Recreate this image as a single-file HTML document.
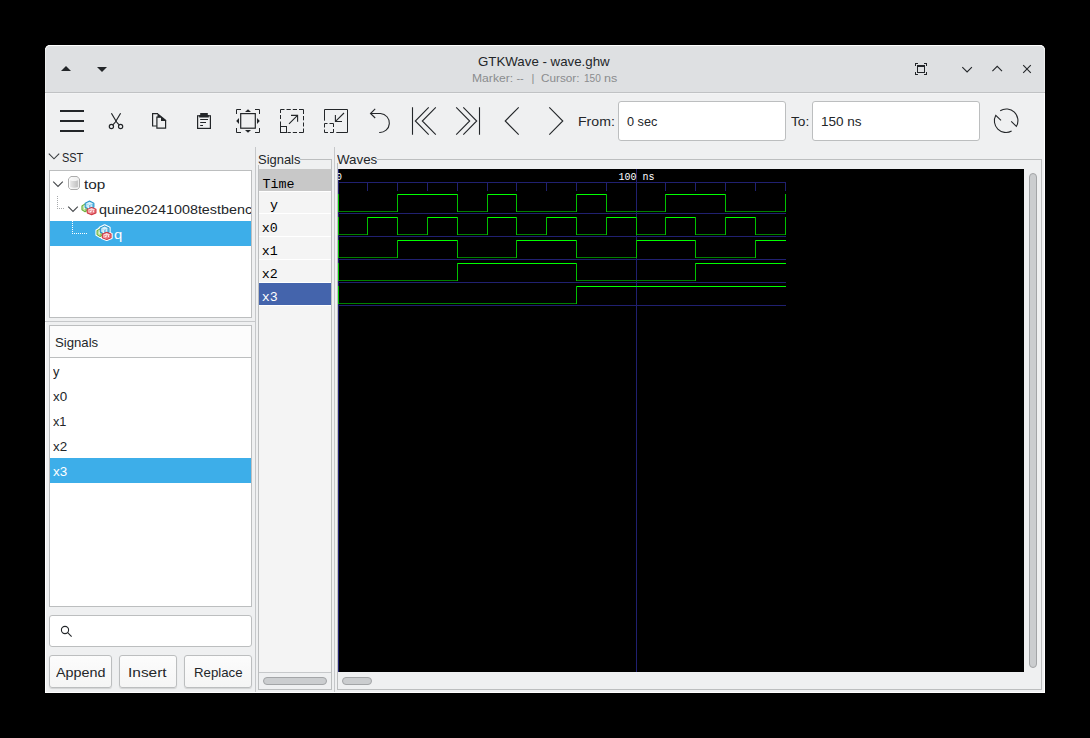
<!DOCTYPE html>
<html><head><meta charset="utf-8"><title>GTKWave - wave.ghw</title>
<style>
html,body{margin:0;padding:0;background:#000;}
body{width:1090px;height:738px;position:relative;overflow:hidden;font-family:"Liberation Sans",sans-serif;font-size:13.3px;color:#232629;}
.a{position:absolute;}
.t{position:absolute;white-space:nowrap;line-height:1;}
.mono{font-family:"Liberation Mono",monospace;}
#win{left:45px;top:45px;width:1000px;height:648px;background:#eff0f1;border-radius:5px 5px 0 0;overflow:hidden;}
#titlebar{left:0;top:0;width:1000px;height:47px;background:#dee0e2;border-bottom:1px solid #c0c2c4;border-radius:5px 5px 0 0;box-shadow:inset 0 1px 0 #ffffff, inset 1px 0 0 #eceded, inset -1px 0 0 #eceded;}
#winedge{left:0;top:48px;width:1000px;height:600px;box-sizing:border-box;border:1px solid #fff;border-top:none;pointer-events:none;}
#hl{left:1px;top:48px;width:998px;height:1px;background:#f3f4f5;}
.entry{background:#fff;border:1px solid #bcbebf;border-radius:3px;box-sizing:border-box;}
.btn{background:linear-gradient(#fcfcfc,#f5f5f5);border:1px solid #bcbebf;border-radius:3px;box-sizing:border-box;box-shadow:0 1px 1px rgba(0,0,0,0.12);}
.box{background:#fff;border:1px solid #bcbebf;box-sizing:border-box;}
.sel{background:#3daee9;}
</style></head><body>
<div id="win" class="a">
  <div id="titlebar" class="a"></div>
  <div id="hl" class="a"></div>
  <div id="winedge" class="a"></div>
</div>

<!-- title text -->

<!-- toolbar labels / entries -->
<div class="a entry" style="left:618px;top:101px;width:168px;height:40px;"></div>
<div class="a entry" style="left:812px;top:101px;width:168px;height:40px;"></div>

<!-- SST -->
<div class="a box" style="left:49px;top:170px;width:203px;height:148px;"></div>
<div class="a sel" style="left:50px;top:221px;width:201px;height:25px;"></div>

<!-- horizontal pane separator -->
<div class="a" style="left:45px;top:321px;width:210px;height:1px;background:#c6c8ca;"></div>

<!-- Signals list -->
<div class="a box" style="left:49px;top:325px;width:203px;height:282px;"></div>
<div class="a" style="left:50px;top:326px;width:201px;height:31px;background:#fcfcfc;border-bottom:1px solid #bcbebf;"></div>
<div class="a sel" style="left:50px;top:458px;width:201px;height:25px;"></div>

<!-- search + buttons -->
<div class="a entry" style="left:49px;top:615px;width:203px;height:32px;"></div>
<div class="a btn" style="left:49px;top:655px;width:63px;height:33px;"></div>
<div class="a btn" style="left:119px;top:655px;width:58px;height:33px;"></div>
<div class="a btn" style="left:184px;top:655px;width:68px;height:33px;"></div>

<!-- pane handles -->
<div class="a" style="left:255px;top:147px;width:1px;height:545px;background:#c6c8ca;"></div>
<div class="a" style="left:334px;top:147px;width:1px;height:545px;background:#c6c8ca;"></div>

<!-- Signals frame -->
<div class="a" style="left:258px;top:159px;width:74px;height:531px;border:1px solid #bcbebf;box-sizing:border-box;"></div>
<div class="a" style="left:257px;top:150px;width:43px;height:15px;background:#eff0f1;"></div>
<div class="a" style="left:259px;top:169px;width:72px;height:503px;background:#f4f4f4;"></div>
<div class="a" style="left:259px;top:169px;width:72px;height:22px;background:#c8c8c8;"></div>
<div class="a" style="left:259px;top:191px;width:72px;height:1px;background:#fff;"></div>
<div class="a" style="left:259px;top:213px;width:72px;height:1px;background:#fff;"></div>
<div class="a" style="left:259px;top:236px;width:72px;height:1px;background:#fff;"></div>
<div class="a" style="left:259px;top:259px;width:72px;height:1px;background:#fff;"></div>
<div class="a" style="left:259px;top:282px;width:72px;height:1px;background:#fff;"></div>
<div class="a" style="left:259px;top:283px;width:72px;height:22px;background:#4464ac;"></div>
<div class="a" style="left:259px;top:305px;width:72px;height:1px;background:#fff;"></div>
<div class="a" style="left:259px;top:672px;width:72px;height:1px;background:#c6c8ca;"></div>
<div class="a" style="left:259px;top:673px;width:72px;height:16px;background:#eff0f1;"></div>
<div class="a" style="left:263px;top:677px;width:64px;height:8px;border-radius:4px;background:#cbcdcf;border:1px solid #a3a5a7;box-sizing:border-box;"></div>

<!-- Waves frame -->
<div class="a" style="left:337px;top:159px;width:705px;height:531px;border:1px solid #bcbebf;box-sizing:border-box;"></div>
<div class="a" style="left:336px;top:150px;width:41px;height:13px;background:#eff0f1;"></div>
<div class="a" id="canvas" style="left:338px;top:169px;width:686px;height:503px;background:#000;overflow:hidden;"><svg width="686" height="503" viewBox="0 0 686 503" shape-rendering="crispEdges" style="position:absolute;left:0;top:0"><rect x="0" y="13" width="448" height="1" fill="#202070"/><rect x="0" y="14" width="1" height="8" fill="#202070"/><rect x="29" y="14" width="1" height="8" fill="#202070"/><rect x="59" y="14" width="1" height="8" fill="#202070"/><rect x="89" y="14" width="1" height="8" fill="#202070"/><rect x="119" y="14" width="1" height="8" fill="#202070"/><rect x="149" y="14" width="1" height="8" fill="#202070"/><rect x="178" y="14" width="1" height="8" fill="#202070"/><rect x="208" y="14" width="1" height="8" fill="#202070"/><rect x="238" y="14" width="1" height="8" fill="#202070"/><rect x="268" y="14" width="1" height="8" fill="#202070"/><rect x="298" y="14" width="1" height="8" fill="#202070"/><rect x="327" y="14" width="1" height="8" fill="#202070"/><rect x="357" y="14" width="1" height="8" fill="#202070"/><rect x="387" y="14" width="1" height="8" fill="#202070"/><rect x="417" y="14" width="1" height="8" fill="#202070"/><rect x="447" y="14" width="1" height="8" fill="#202070"/><rect x="0" y="0" width="1" height="503" fill="#202070"/><rect x="298" y="0" width="1" height="503" fill="#202070"/><rect x="0" y="44" width="448" height="1" fill="#202070"/><rect x="0" y="42" width="60" height="1" fill="#008000"/><rect x="59" y="25" width="61" height="1" fill="#00ff00"/><rect x="119" y="42" width="31" height="1" fill="#008000"/><rect x="149" y="25" width="30" height="1" fill="#00ff00"/><rect x="178" y="42" width="61" height="1" fill="#008000"/><rect x="238" y="25" width="31" height="1" fill="#00ff00"/><rect x="268" y="42" width="60" height="1" fill="#008000"/><rect x="327" y="25" width="61" height="1" fill="#00ff00"/><rect x="387" y="42" width="61" height="1" fill="#008000"/><rect x="0" y="25" width="1" height="18" fill="#00c000"/><rect x="59" y="25" width="1" height="18" fill="#00c000"/><rect x="119" y="25" width="1" height="18" fill="#00c000"/><rect x="149" y="25" width="1" height="18" fill="#00c000"/><rect x="178" y="25" width="1" height="18" fill="#00c000"/><rect x="238" y="25" width="1" height="18" fill="#00c000"/><rect x="268" y="25" width="1" height="18" fill="#00c000"/><rect x="327" y="25" width="1" height="18" fill="#00c000"/><rect x="387" y="25" width="1" height="18" fill="#00c000"/><rect x="447" y="25" width="1" height="18" fill="#00c000"/><rect x="0" y="67" width="448" height="1" fill="#202070"/><rect x="0" y="65" width="30" height="1" fill="#008000"/><rect x="29" y="48" width="31" height="1" fill="#00ff00"/><rect x="59" y="65" width="31" height="1" fill="#008000"/><rect x="89" y="48" width="31" height="1" fill="#00ff00"/><rect x="119" y="65" width="31" height="1" fill="#008000"/><rect x="149" y="48" width="30" height="1" fill="#00ff00"/><rect x="178" y="65" width="31" height="1" fill="#008000"/><rect x="208" y="48" width="31" height="1" fill="#00ff00"/><rect x="238" y="65" width="31" height="1" fill="#008000"/><rect x="268" y="48" width="31" height="1" fill="#00ff00"/><rect x="298" y="65" width="30" height="1" fill="#008000"/><rect x="327" y="48" width="31" height="1" fill="#00ff00"/><rect x="357" y="65" width="31" height="1" fill="#008000"/><rect x="387" y="48" width="31" height="1" fill="#00ff00"/><rect x="417" y="65" width="31" height="1" fill="#008000"/><rect x="0" y="48" width="1" height="18" fill="#00c000"/><rect x="29" y="48" width="1" height="18" fill="#00c000"/><rect x="59" y="48" width="1" height="18" fill="#00c000"/><rect x="89" y="48" width="1" height="18" fill="#00c000"/><rect x="119" y="48" width="1" height="18" fill="#00c000"/><rect x="149" y="48" width="1" height="18" fill="#00c000"/><rect x="178" y="48" width="1" height="18" fill="#00c000"/><rect x="208" y="48" width="1" height="18" fill="#00c000"/><rect x="238" y="48" width="1" height="18" fill="#00c000"/><rect x="268" y="48" width="1" height="18" fill="#00c000"/><rect x="298" y="48" width="1" height="18" fill="#00c000"/><rect x="327" y="48" width="1" height="18" fill="#00c000"/><rect x="357" y="48" width="1" height="18" fill="#00c000"/><rect x="387" y="48" width="1" height="18" fill="#00c000"/><rect x="417" y="48" width="1" height="18" fill="#00c000"/><rect x="447" y="48" width="1" height="18" fill="#00c000"/><rect x="0" y="90" width="448" height="1" fill="#202070"/><rect x="0" y="88" width="60" height="1" fill="#008000"/><rect x="59" y="71" width="61" height="1" fill="#00ff00"/><rect x="119" y="88" width="60" height="1" fill="#008000"/><rect x="178" y="71" width="61" height="1" fill="#00ff00"/><rect x="238" y="88" width="61" height="1" fill="#008000"/><rect x="298" y="71" width="60" height="1" fill="#00ff00"/><rect x="357" y="88" width="61" height="1" fill="#008000"/><rect x="417" y="71" width="31" height="1" fill="#00ff00"/><rect x="0" y="71" width="1" height="18" fill="#00c000"/><rect x="59" y="71" width="1" height="18" fill="#00c000"/><rect x="119" y="71" width="1" height="18" fill="#00c000"/><rect x="178" y="71" width="1" height="18" fill="#00c000"/><rect x="238" y="71" width="1" height="18" fill="#00c000"/><rect x="298" y="71" width="1" height="18" fill="#00c000"/><rect x="357" y="71" width="1" height="18" fill="#00c000"/><rect x="417" y="71" width="1" height="18" fill="#00c000"/><rect x="0" y="113" width="448" height="1" fill="#202070"/><rect x="0" y="111" width="120" height="1" fill="#008000"/><rect x="119" y="94" width="120" height="1" fill="#00ff00"/><rect x="238" y="111" width="120" height="1" fill="#008000"/><rect x="357" y="94" width="91" height="1" fill="#00ff00"/><rect x="0" y="94" width="1" height="18" fill="#00c000"/><rect x="119" y="94" width="1" height="18" fill="#00c000"/><rect x="238" y="94" width="1" height="18" fill="#00c000"/><rect x="357" y="94" width="1" height="18" fill="#00c000"/><rect x="0" y="136" width="448" height="1" fill="#202070"/><rect x="0" y="134" width="239" height="1" fill="#008000"/><rect x="238" y="117" width="210" height="1" fill="#00ff00"/><rect x="0" y="117" width="1" height="18" fill="#00c000"/><rect x="238" y="117" width="1" height="18" fill="#00c000"/></svg>
  <div class="t mono" id="t0" style="left:-2px;top:2.5px;font-size:10px;color:#fff;transform-origin:0 0;transform:scaleY(1.17);">0</div>
  <div class="t mono" id="t100" style="left:280.6px;top:2.5px;font-size:10px;color:#fff;transform-origin:0 0;transform:scaleY(1.17);">100 ns</div>
</div>
<div class="a" style="left:1029px;top:173px;width:8px;height:495px;border-radius:4px;background:#cbcdcf;border:1px solid #a3a5a7;box-sizing:border-box;"></div>
<div class="a" style="left:342px;top:677px;width:30px;height:8px;border-radius:4px;background:#cbcdcf;border:1px solid #a3a5a7;box-sizing:border-box;"></div>

<div class="t" id="ttl" style="left:478.40px;top:55.00px;font-size:13.3px;color:#232629;transform-origin:0 0;transform:scaleX(0.9992);">GTKWave - wave.ghw</div>
<div class="t" id="sub1" style="left:471.50px;top:73.00px;font-size:11px;color:#8a8c8e;transform-origin:0 0;transform:scaleX(1.1028);">Marker:</div>
<div class="t" id="sub2" style="left:516.40px;top:73.00px;font-size:11px;color:#8a8c8e;transform-origin:0 0;transform:scaleX(1.0000);">--</div>
<div class="t" id="sub3" style="left:531.40px;top:73.00px;font-size:11px;color:#8a8c8e;transform-origin:0 0;transform:scaleX(1.0000);">|</div>
<div class="t" id="sub4" style="left:541.43px;top:73.00px;font-size:11px;color:#8a8c8e;transform-origin:0 0;transform:scaleX(1.0676);">Cursor:</div>
<div class="t" id="sub5" style="left:584.28px;top:73.00px;font-size:11px;color:#8a8c8e;transform-origin:0 0;transform:scaleX(0.9176);">150</div>
<div class="t" id="sub6" style="left:604.46px;top:73.00px;font-size:11px;color:#8a8c8e;transform-origin:0 0;transform:scaleX(1.1400);">ns</div>
<div class="t" id="from" style="left:578.34px;top:115.00px;font-size:13.3px;color:#232629;transform-origin:0 0;transform:scaleX(1.0606);">From:</div>
<div class="t" id="fromv" style="left:627.40px;top:115.00px;font-size:13.3px;color:#232629;transform-origin:0 0;transform:scaleX(0.9563);">0 sec</div>
<div class="t" id="to" style="left:791.00px;top:115.00px;font-size:13.3px;color:#232629;transform-origin:0 0;transform:scaleX(1.0294);">To:</div>
<div class="t" id="tov" style="left:820.98px;top:115.00px;font-size:13.3px;color:#232629;transform-origin:0 0;transform:scaleX(1.0179);">150 ns</div>
<div class="t" id="sst" style="left:61.58px;top:151.00px;font-size:13.3px;color:#232629;transform-origin:0 0;transform:scaleX(0.8240);">SST</div>
<div class="t" id="top" style="left:84.30px;top:177.60px;font-size:13.3px;color:#232629;transform-origin:0 0;transform:scaleX(1.1500);">top</div>
<div class="a" style="left:97px;top:202.60px;width:154px;height:17.3px;overflow:hidden;"><div class="t" id="quine" style="left:1.62px;top:0;font-size:13.3px;color:#232629;transform-origin:0 0;transform:scaleX(1.0784);">quine20241008testbench</div></div>
<div class="t" id="q" style="left:113.88px;top:227.60px;font-size:13.3px;color:#fff;transform-origin:0 0;transform:scaleX(1.1167);">q</div>
<div class="t" id="sigh" style="left:55.41px;top:336.00px;font-size:13.3px;color:#232629;transform-origin:0 0;transform:scaleX(0.9905);">Signals</div>
<div class="t" id="l0" style="left:53.10px;top:365.00px;font-size:13.3px;color:#232629;transform-origin:0 0;transform:scaleX(0.9714);">y</div>
<div class="t" id="l1" style="left:53.10px;top:390.00px;font-size:13.3px;color:#232629;transform-origin:0 0;transform:scaleX(1.0071);">x0</div>
<div class="t" id="l2" style="left:53.10px;top:415.00px;font-size:13.3px;color:#232629;transform-origin:0 0;transform:scaleX(0.9571);">x1</div>
<div class="t" id="l3" style="left:53.10px;top:440.00px;font-size:13.3px;color:#232629;transform-origin:0 0;transform:scaleX(1.0071);">x2</div>
<div class="t" id="l4" style="left:53.10px;top:465.00px;font-size:13.3px;color:#fff;transform-origin:0 0;transform:scaleX(1.0071);">x3</div>
<div class="t" id="b1" style="left:56.00px;top:666.00px;font-size:13.3px;color:#232629;transform-origin:0 0;transform:scaleX(1.0800);">Append</div>
<div class="t" id="b2" style="left:128.24px;top:666.00px;font-size:13.3px;color:#232629;transform-origin:0 0;transform:scaleX(1.1625);">Insert</div>
<div class="t" id="b3" style="left:193.60px;top:666.00px;font-size:13.3px;color:#232629;transform-origin:0 0;transform:scaleX(0.9957);">Replace</div>
<div class="t" id="sigf" style="left:257.53px;top:152.80px;font-size:13.3px;color:#232629;transform-origin:0 0;transform:scaleX(0.9738);">Signals</div>
<div class="t" id="wavf" style="left:337.00px;top:152.80px;font-size:13.3px;color:#232629;transform-origin:0 0;transform:scaleX(1.0025);">Waves</div>
<div class="t" id="m0" style="left:262.50px;top:178.00px;font-size:13.33px;color:#000;font-family:'Liberation Mono',monospace;transform-origin:0 0;transform:scaleX(1.0000);">Time</div>
<div class="t" id="m1" style="left:270.00px;top:199.00px;font-size:13.33px;color:#000;font-family:'Liberation Mono',monospace;transform-origin:0 0;transform:scaleX(1.0000);">y</div>
<div class="t" id="m2" style="left:261.80px;top:222.00px;font-size:13.33px;color:#000;font-family:'Liberation Mono',monospace;transform-origin:0 0;transform:scaleX(1.0000);">x0</div>
<div class="t" id="m3" style="left:261.80px;top:245.00px;font-size:13.33px;color:#000;font-family:'Liberation Mono',monospace;transform-origin:0 0;transform:scaleX(1.0000);">x1</div>
<div class="t" id="m4" style="left:261.80px;top:268.00px;font-size:13.33px;color:#000;font-family:'Liberation Mono',monospace;transform-origin:0 0;transform:scaleX(1.0000);">x2</div>
<div class="t" id="m5" style="left:261.80px;top:291.00px;font-size:13.33px;color:#fff;font-family:'Liberation Mono',monospace;transform-origin:0 0;transform:scaleX(1.0000);">x3</div>
<!--ICONS_START--><svg class="a" style="left:0;top:0;pointer-events:none" width="1090" height="738" viewBox="0 0 1090 738" fill="none" stroke="#232629" stroke-width="1">
<!-- titlebar left triangles -->
<path d="M61 71 L66 66 L71 71 Z" fill="#232629" stroke="none"/>
<path d="M97 67 L107 67 L102 72 Z" fill="#232629" stroke="none"/>
<!-- titlebar right: fullscreen -->
<g stroke="none" fill="#232629">
<path d="M915 63h3v1h-2v2h-1z M927 63v3h-1v-2h-2v-1z M915 75v-3h1v2h2v1z M927 75h-3v-1h2v-2h1z"/>
<path d="M917 65h8v8h-8z M918 67v5h6v-5z" fill-rule="evenodd"/>
</g>
<path d="M962.3 67.2 L967.1 72 L971.9 67.2" stroke-width="1.1"/>
<path d="M992.4 71.2 L997.2 66.4 L1002 71.2" stroke-width="1.1"/>
<path d="M1023.2 65.2 L1030.8 72.8 M1030.8 65.2 L1023.2 72.8" stroke-width="1.1"/>

<!-- hamburger -->
<path d="M60 111h24 M60 121h24 M60 131h24" stroke-width="2"/>
<!-- scissors -->
<g stroke-width="1.2">
<path d="M111.4 113.2 L116.6 122 Q118 124 119.2 124.8"/>
<path d="M120.6 113.2 L115.4 122 Q114 124 112.8 124.8"/>
<circle cx="111.4" cy="126.5" r="2.1"/>
<circle cx="120.6" cy="126.5" r="2.1"/>
</g>
<!-- copy -->
<g stroke-width="1.2">
<path d="M158 113.6 H152.6 V126 H156.8"/>
<path d="M161 117.2 H156.9 V128.2 H165.6 V120.5"/>
<path d="M157.5 113 L166.2 119.9 V120.9 H161 V117.2 H157.5 Z" fill="#232629" stroke="none"/>
</g>
<!-- paste -->
<g>
<rect x="197.6" y="115.8" width="12.8" height="12.6" stroke-width="1.2"/>
<path d="M200.2 113h7.6v2h1v2.6h-9.6v-2.6h1z" fill="#232629" stroke="none"/>
<path d="M200.2 119.5h7.8 M200.2 122.5h5.8 M200.2 125.5h2.8" stroke-width="1"/>
</g>
<!-- zoom fit -->
<g>
<path d="M236.5 114 V109.5 H241 M255 109.5 H259.5 V114 M259.5 128 V132.5 H255 M241 132.5 H236.5 V128" stroke-width="1"/>
<rect x="240.7" y="113.6" width="14.6" height="14.6" stroke-width="1.2"/>
<path d="M248 109.2 L251 112 H245 Z M248 132.8 L251 130 H245 Z M236.2 121 L239 118 V124 Z M259.8 121 L257 118 V124 Z" fill="#232629" stroke="none"/>
</g>
<!-- zoom in -->
<g>
<path d="M280.5 126 V121.5 M280.5 119 V115 M280.5 113 V109.5 H284.5 M286.5 109.5 H290.8 M292.8 109.5 H297 M299 109.5 H303.5 V114 M303.5 116 V120.3 M303.5 122.5 V126.5 M303.5 128.5 V132.5 H299 M297 132.5 H292.8 M290.8 132.5 H287.5"/>
<rect x="280.5" y="126.5" width="6" height="6"/>
<path d="M289 123.8 L297.5 115.4 M291 115.4 H297.6 V121.8" stroke-width="1.1"/>
</g>
<!-- zoom out -->
<g>
<path d="M324.5 120.7 V109.5 H347.5 V132.5 H336.3"/>
<path d="M324.5 132.5 V129.5 M324.5 127.5 V123.5 H327.5 M329.5 123.5 H333.5 V127 M333.5 129 V132.5 H330 M328 132.5 H324.5"/>
<path d="M344 113 L335.5 121.4 M335.4 115 V121.5 H342" stroke-width="1.1"/>
</g>
<!-- undo -->
<path d="M375.2 108.9 L370.5 113.5 L375.2 118 M370.5 113.5 H380.5 A9.5 9.5 0 0 1 379.2 132.5" stroke-width="1.1"/>
<!-- first -->
<path d="M412.5 107.2 V134.8 M428.7 107.3 L415.3 121 L428.7 134.7 M435.8 107.3 L422.3 121 L435.8 134.7" stroke-width="1.1"/>
<!-- last -->
<path d="M479.5 107.2 V134.8 M463.3 107.3 L476.7 121 L463.3 134.7 M456.2 107.3 L469.7 121 L456.2 134.7" stroke-width="1.1"/>
<!-- prev / next -->
<path d="M518.7 107.3 L505.2 121 L518.7 134.7" stroke-width="1.1"/>
<path d="M549.3 107.3 L562.8 121 L549.3 134.7" stroke-width="1.1"/>
<!-- reload -->
<g stroke-width="1.1">
<path d="M1000.2 110.7 A11.6 11.6 0 0 1 1016.4 126.3 L1011.2 121.4"/>
<path d="M1011.6 131 A11.6 11.6 0 0 1 995.8 115.3 L1001 120.4"/>
</g>

<!-- SST expander -->
<path d="M48.8 153.6 L54 158.8 L59.2 153.6" stroke-width="1.1" stroke="#3a3d40"/>
<!-- tree chevrons -->
<path d="M53.2 181.7 L58 186.5 L62.8 181.7" stroke-width="1.1" stroke="#45484b"/>
<path d="M68.2 206.7 L73 211.5 L77.8 206.7" stroke-width="1.1" stroke="#45484b"/>
<!-- tree dotted lines -->
<path d="M57.5 196 V209 M57 208.5 H64" stroke="#a8aaac" stroke-dasharray="1 1" shape-rendering="crispEdges"/>
<path d="M72.5 221 V234 M72 233.5 H87" stroke="#ffffff" stroke-dasharray="1 1" shape-rendering="crispEdges"/>
<!-- tree icons -->
<g stroke="none"><defs><linearGradient id="cg" x1="0" x2="1" y1="0" y2="0"><stop offset="0" stop-color="#fcfcfc"/><stop offset="1" stop-color="#ececec"/></linearGradient>
<linearGradient id="cg2" x1="0" x2="1" y1="0" y2="0"><stop offset="0" stop-color="#e6e6e6"/><stop offset="0.55" stop-color="#d2d2d2"/><stop offset="1" stop-color="#c0c0c0"/></linearGradient></defs>
<path d="M71 176.5 H77 L79.5 178.8 V187.4 L77.3 189.5 H70.7 L68.5 187.4 V178.8 Z" fill="url(#cg)" stroke="#acacac" stroke-width="1" stroke-linejoin="round"/>
<path d="M70.2 180.2 Q74 181.9 77.9 180.2 V187 Q74 188.6 70.2 187 Z" fill="url(#cg2)" stroke="none"/><polygon points="85.10,204.10 88.20,206.00 88.20,209.80 85.10,211.70 82.00,209.80 82.00,206.00" fill="#69b13a" stroke="#69b13a" stroke-width="1.2" stroke-linejoin="round"/><polygon points="82.50,206.25 85.10,204.60 87.70,206.25 85.10,207.90" fill="#e0f3d2"/><polygon points="82.50,206.25 85.10,207.90 85.10,211.20 82.50,209.55" fill="#c0e4a6"/><polygon points="85.10,207.90 87.70,206.25 87.70,209.55 85.10,211.20" fill="#9ad374"/><polygon points="89.55,201.15 93.85,203.20 93.85,207.30 89.55,209.35 85.25,207.30 85.25,203.20" fill="#2b97cb" stroke="#2b97cb" stroke-width="1.2" stroke-linejoin="round"/><polygon points="85.75,203.45 89.55,201.65 93.35,203.45 89.55,205.25" fill="#d6f0fb"/><polygon points="85.75,203.45 89.55,205.25 89.55,208.85 85.75,207.05" fill="#a9dcf4"/><polygon points="89.55,205.25 93.35,203.45 93.35,207.05 89.55,208.85" fill="#74c5ec"/><polygon points="91.60,207.60 95.90,209.35 95.90,212.85 91.60,214.60 87.30,212.85 87.30,209.35" fill="#d03a44" stroke="#d03a44" stroke-width="1.2" stroke-linejoin="round"/><polygon points="87.80,209.60 91.60,208.10 95.40,209.60 91.60,211.10" fill="#fbd6d8"/><polygon points="87.80,209.60 91.60,211.10 91.60,214.10 87.80,212.60" fill="#f4a9ad"/><polygon points="91.60,211.10 95.40,209.60 95.40,212.60 91.60,214.10" fill="#ea7a81"/><path d="M88.0 204.6 v3.2 h1 M91.2 204.4 v2.6 M90.0 211.6 h1.6 M93.4 210.4 v2 M84.2 207.4 l0.7 1.6" stroke="#ffffff" stroke-width="0.9" fill="none"/><polygon points="100.20,228.20 104.00,230.45 104.00,234.95 100.20,237.20 96.40,234.95 96.40,230.45" fill="#ffffff" stroke="#ffffff" stroke-width="2" stroke-linejoin="round"/><polygon points="104.65,225.25 109.65,227.65 109.65,232.45 104.65,234.85 99.65,232.45 99.65,227.65" fill="#ffffff" stroke="#ffffff" stroke-width="2" stroke-linejoin="round"/><polygon points="106.70,231.70 111.70,233.80 111.70,238.00 106.70,240.10 101.70,238.00 101.70,233.80" fill="#ffffff" stroke="#ffffff" stroke-width="2" stroke-linejoin="round"/><polygon points="100.20,228.90 103.30,230.80 103.30,234.60 100.20,236.50 97.10,234.60 97.10,230.80" fill="#69b13a" stroke="#69b13a" stroke-width="1.2" stroke-linejoin="round"/><polygon points="97.60,231.05 100.20,229.40 102.80,231.05 100.20,232.70" fill="#e0f3d2"/><polygon points="97.60,231.05 100.20,232.70 100.20,236.00 97.60,234.35" fill="#c0e4a6"/><polygon points="100.20,232.70 102.80,231.05 102.80,234.35 100.20,236.00" fill="#9ad374"/><polygon points="104.65,225.95 108.95,228.00 108.95,232.10 104.65,234.15 100.35,232.10 100.35,228.00" fill="#2b97cb" stroke="#2b97cb" stroke-width="1.2" stroke-linejoin="round"/><polygon points="100.85,228.25 104.65,226.45 108.45,228.25 104.65,230.05" fill="#d6f0fb"/><polygon points="100.85,228.25 104.65,230.05 104.65,233.65 100.85,231.85" fill="#a9dcf4"/><polygon points="104.65,230.05 108.45,228.25 108.45,231.85 104.65,233.65" fill="#74c5ec"/><polygon points="106.70,232.40 111.00,234.15 111.00,237.65 106.70,239.40 102.40,237.65 102.40,234.15" fill="#d03a44" stroke="#d03a44" stroke-width="1.2" stroke-linejoin="round"/><polygon points="102.90,234.40 106.70,232.90 110.50,234.40 106.70,235.90" fill="#fbd6d8"/><polygon points="102.90,234.40 106.70,235.90 106.70,238.90 102.90,237.40" fill="#f4a9ad"/><polygon points="106.70,235.90 110.50,234.40 110.50,237.40 106.70,238.90" fill="#ea7a81"/><path d="M103.1 229.4 v3.2 h1 M106.3 229.2 v2.6 M105.1 236.4 h1.6 M108.5 235.2 v2 M99.3 232.2 l0.7 1.6" stroke="#ffffff" stroke-width="0.9" fill="none"/></g>
<!-- search icon -->
<circle cx="65" cy="630" r="3.6" stroke-width="1.1"/>
<path d="M67.7 632.7 L71.6 636.6" stroke-width="1.1"/>
</svg>
<!--ICONS_END-->
</body></html>
